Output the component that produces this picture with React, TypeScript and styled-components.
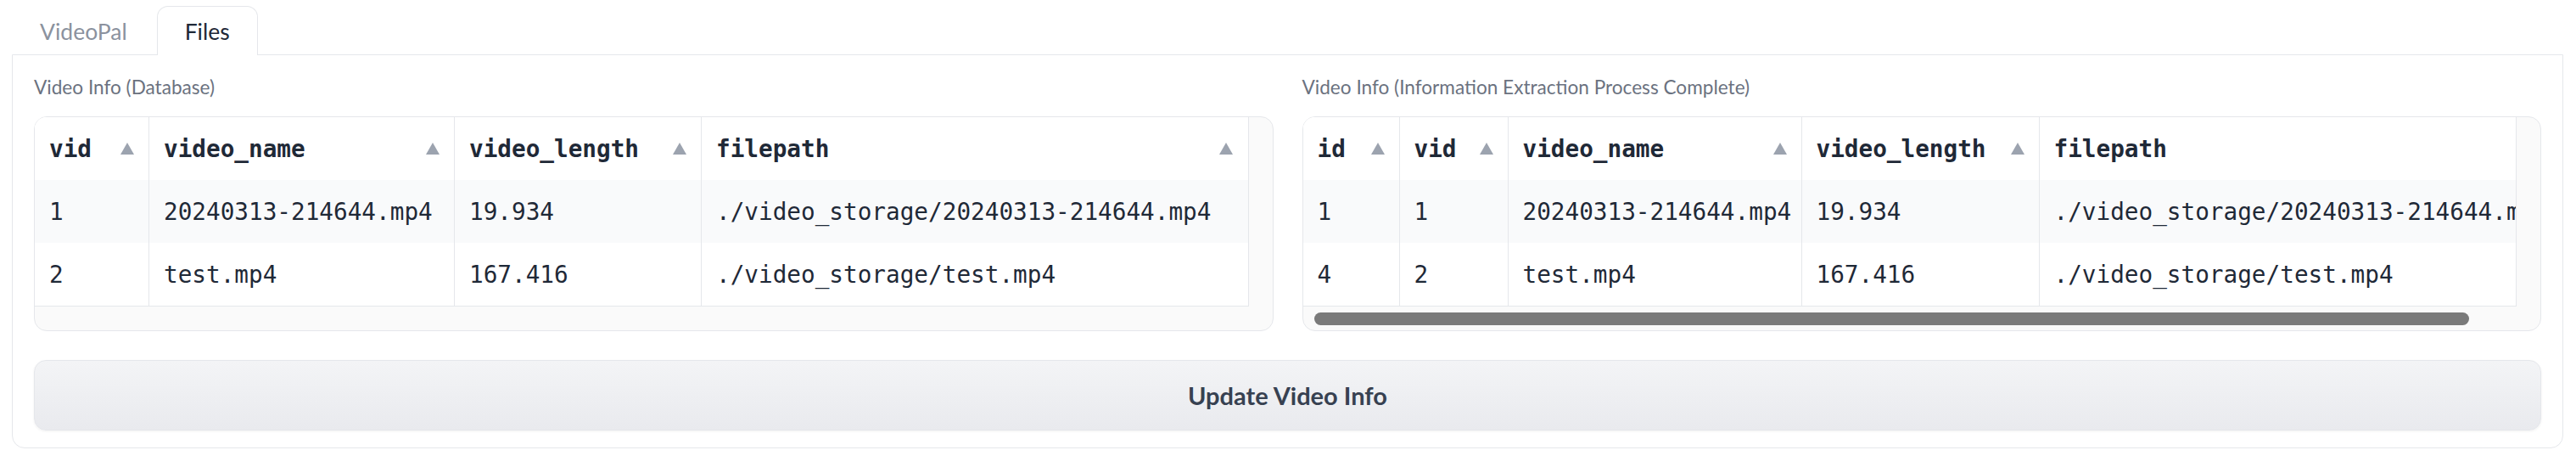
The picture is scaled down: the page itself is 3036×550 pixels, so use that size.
import React from "react";
import styled, { createGlobalStyle } from "styled-components";

const GlobalStyle = createGlobalStyle`
  html, body {
    margin: 0;
    padding: 0;
    background: #ffffff;
  }
  * {
    box-sizing: border-box;
  }
`;

const SANS = `"Lato", "Liberation Sans", sans-serif`;
const MONO = `"DejaVu Sans Mono", "Liberation Mono", monospace`;
const VISIBLE_WIDTH = 1429;

type Column = { key: string; width: number; sortable?: boolean };
type TableSpec = {
  label: string;
  columns: Column[];
  rows: Record<string, string>[];
};

const dbTable: TableSpec = {
  label: "Video Info (Database)",
  columns: [
    { key: "vid", width: 135, sortable: true },
    { key: "video_name", width: 360, sortable: true },
    { key: "video_length", width: 291, sortable: true },
    { key: "filepath", width: 643, sortable: true },
  ],
  rows: [
    { vid: "1", video_name: "20240313-214644.mp4", video_length: "19.934", filepath: "./video_storage/20240313-214644.mp4" },
    { vid: "2", video_name: "test.mp4", video_length: "167.416", filepath: "./video_storage/test.mp4" },
  ],
};

const extractTable: TableSpec = {
  label: "Video Info (Information Extraction Process Complete)",
  columns: [
    { key: "id", width: 114, sortable: true },
    { key: "vid", width: 128, sortable: true },
    { key: "video_name", width: 346, sortable: true },
    { key: "video_length", width: 280, sortable: true },
    { key: "filepath", width: 636, sortable: true },
  ],
  rows: [
    { id: "1", vid: "1", video_name: "20240313-214644.mp4", video_length: "19.934", filepath: "./video_storage/20240313-214644.mp4" },
    { id: "4", vid: "2", video_name: "test.mp4", video_length: "167.416", filepath: "./video_storage/test.mp4" },
  ],
};

const Page = styled.div`
  width: 3036px;
  padding: 7px 15px 0 14px;
  font-family: ${SANS};
`;

const TabBar = styled.div`
  display: flex;
  gap: 2px;
  margin-bottom: -1px;
  position: relative;
  z-index: 1;
`;

const TabButton = styled.div<{ $active?: boolean }>`
  height: 58px;
  padding: 0 32px;
  display: flex;
  align-items: center;
  font-size: 26.5px;
  line-height: 32px;
  color: ${({ $active }) => ($active ? "#1f2937" : "#8b929e")};
  background: ${({ $active }) => ($active ? "#ffffff" : "transparent")};
  border: 1px solid ${({ $active }) => ($active ? "#e5e7eb" : "transparent")};
  border-bottom: none;
  border-radius: 13px 13px 0 0;
`;

const Panel = styled.div`
  border: 1px solid #e5e7eb;
  border-radius: 0 0 15px 15px;
  padding: 24px 25px 20px 25px;
  display: flex;
  flex-direction: column;
  gap: 34px;
`;

const Columns = styled.div`
  display: grid;
  grid-template-columns: 1fr 1fr;
  gap: 34px;
`;

const Block = styled.div`
  display: flex;
  flex-direction: column;
  gap: 20px;
  min-width: 0;
`;

const Label = styled.div`
  font-size: 22.6px;
  line-height: 28px;
  color: #6b7280;
`;

const Frame = styled.div`
  display: grid;
  grid-template-columns: 1fr 28px;
  grid-template-rows: auto 28px;
  border: 1px solid #e5e7eb;
  border-radius: 15px;
  background: #fafafa;
  overflow: hidden;
`;

const Viewport = styled.div`
  background: #ffffff;
  border-right: 1px solid #e5e7eb;
  border-bottom: 1px solid #e5e7eb;
  overflow: hidden;
`;

const Row = styled.div<{ $striped?: boolean }>`
  display: grid;
  height: 74px;
  background: ${({ $striped }) => ($striped ? "#f9fafb" : "#ffffff")};
  font-family: ${MONO};
  font-size: 27.7px;
  color: #1f2937;
`;

const Cell = styled.div<{ $head?: boolean; $last?: boolean }>`
  display: flex;
  align-items: center;
  justify-content: space-between;
  padding: 0 17px;
  white-space: nowrap;
  font-weight: ${({ $head }) => ($head ? 700 : 400)};
  border-right: ${({ $last }) => ($last ? "none" : "1px solid #e5e7eb")};
`;

const SortIcon = styled.svg`
  flex: none;
  width: 16px;
  height: 14px;
  fill: #9ca3af;
`;

const ScrollStrip = styled.div`
  grid-column: 1 / -1;
  padding: 7px 13px 0 13px;
`;

const ScrollThumb = styled.div`
  height: 15px;
  border-radius: 8px;
  background: #7a7a7a;
`;

const UpdateButton = styled.button`
  height: 83px;
  width: 100%;
  border: 1px solid #e5e7eb;
  border-radius: 14px;
  background: linear-gradient(180deg, #f3f4f6 0%, #e9eaee 100%);
  box-shadow: 0 1px 3px rgba(0, 0, 0, 0.06);
  font-family: ${SANS};
  font-size: 29px;
  font-weight: 700;
  color: #374151;
  cursor: pointer;
`;

const Sort = () => (
  <SortIcon viewBox="0 0 16 14">
    <polygon points="8,0 16,14 0,14" />
  </SortIcon>
);

const DataTable: React.FC<{ spec: TableSpec }> = ({ spec }) => {
  const template = spec.columns.map((c) => `${c.width}px`).join(" ");
  const contentWidth = spec.columns.reduce((sum, c) => sum + c.width, 0);
  const overflowing = contentWidth > VISIBLE_WIDTH;
  const lastIndex = spec.columns.length - 1;

  return (
    <Frame>
      <Viewport>
        <Row style={{ gridTemplateColumns: template }}>
          {spec.columns.map((c, i) => (
            <Cell key={c.key} $head $last={i === lastIndex}>
              <span>{c.key}</span>
              {c.sortable && <Sort />}
            </Cell>
          ))}
        </Row>
        {spec.rows.map((r, ri) => (
          <Row key={ri} $striped={ri % 2 === 0} style={{ gridTemplateColumns: template }}>
            {spec.columns.map((c, i) => (
              <Cell key={c.key} $last={i === lastIndex}>
                {r[c.key]}
              </Cell>
            ))}
          </Row>
        ))}
      </Viewport>
      <div />
      <ScrollStrip>
        {overflowing && (
          <ScrollThumb style={{ width: `${(VISIBLE_WIDTH / contentWidth) * 100}%` }} />
        )}
      </ScrollStrip>
    </Frame>
  );
};

const App: React.FC = () => {
  return (
    <>
      <GlobalStyle />
      <Page>
        <TabBar>
          <TabButton>VideoPal</TabButton>
          <TabButton $active>Files</TabButton>
        </TabBar>
        <Panel>
          <Columns>
            <Block>
              <Label>{dbTable.label}</Label>
              <DataTable spec={dbTable} />
            </Block>
            <Block>
              <Label>{extractTable.label}</Label>
              <DataTable spec={extractTable} />
            </Block>
          </Columns>
          <UpdateButton>Update Video Info</UpdateButton>
        </Panel>
      </Page>
    </>
  );
};

export default App;
